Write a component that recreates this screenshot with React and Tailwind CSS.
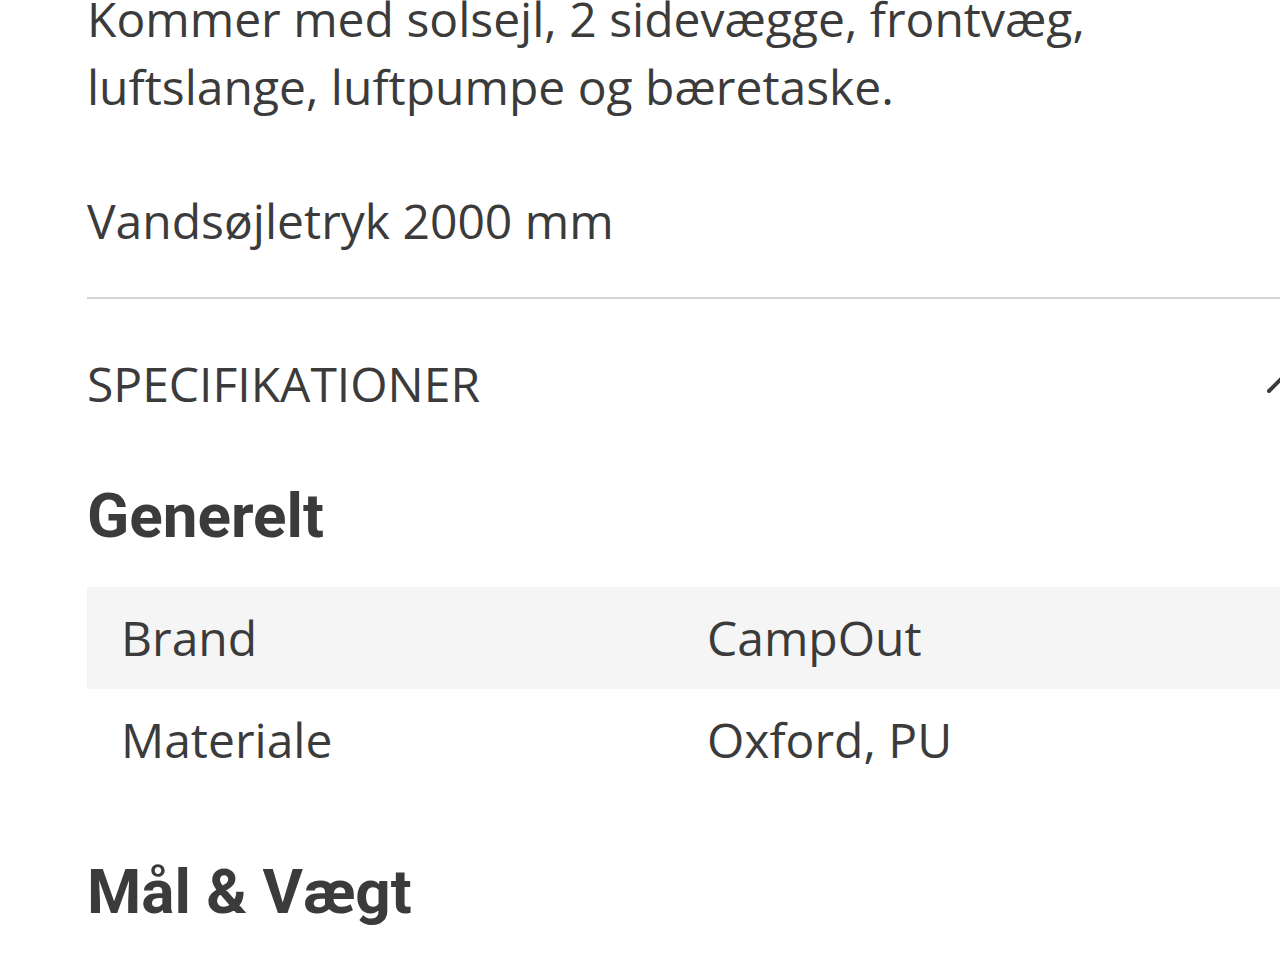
export default function App() {
  const body = { fontFamily: '"Open Sans", "Liberation Sans", sans-serif' };
  const head = { fontFamily: 'Roboto, "Liberation Sans", sans-serif' };

  return (
    <div className="w-[1280px] h-[960px] overflow-hidden bg-white text-[#3b3b3b]">
      <div className="w-[1302px] pl-[87px]" style={body}>
        {/* Description */}
        <p className="-mt-[15px] text-[48px] leading-[68px]">
          Kommer med solsejl, 2 sidevægge, frontvæg,
          <br />
          luftslange, luftpumpe og bæretaske.
        </p>
        <p className="mt-[66px] text-[48px] leading-[68px]">Vandsøjletryk 2000 mm</p>

        <div className="mt-[42px] h-[2px] bg-[#d4d4d4]" />

        {/* Specifications */}
        <div className="flex items-center justify-between h-[170px]">
          <span className="text-[48px] leading-[68px]">SPECIFIKATIONER</span>
          <svg width="34" height="20" viewBox="0 0 34 20" className="mr-[2px]">
            <path d="M3 17 L17 3 L31 17" fill="none" stroke="#3b3b3b" strokeWidth="4" strokeLinecap="round" />
          </svg>
        </div>

        <h2 className="mt-[7px] text-[62px] leading-[80px] font-bold" style={head}>Generelt</h2>

        <div className="mt-[31px]">
          <div className="flex h-[102px] items-center bg-[#f5f5f5] text-[48px]">
            <span className="w-[620px] pl-[34px]">Brand</span>
            <span>CampOut</span>
          </div>
          <div className="flex h-[102px] items-center text-[48px]">
            <span className="w-[620px] pl-[34px]">Materiale</span>
            <span>Oxford, PU</span>
          </div>
        </div>

        <h2 className="mt-[61px] text-[62px] leading-[80px] font-bold" style={head}>Mål &amp; Vægt</h2>
      </div>
    </div>
  );
}
